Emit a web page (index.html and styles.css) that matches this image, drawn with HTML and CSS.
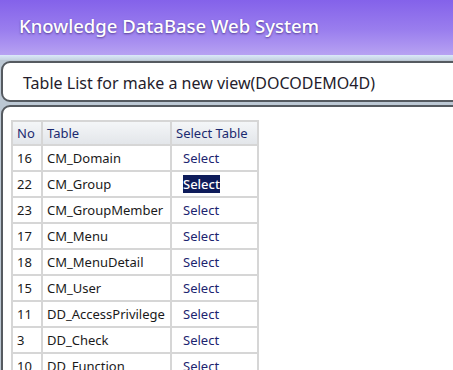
FILE: index.html
```html
<!DOCTYPE html>
<html lang="en">

<head>
    <meta charset="UTF-8">
    <title>Knowledge DataBase Web System</title>
    <link rel="stylesheet" href="styles.css">
</head>

<body>
    <header class="app-header">
        <h1 class="app-title">Knowledge DataBase Web System</h1>
    </header>
    <div class="header-strip"></div>

    <div class="page-title">
        <h2>Table List for make a new view(DOCODEMO4D)</h2>
    </div>

    <main class="page-body">
        <table class="table-list">
            <thead>
                <tr>
                    <th class="col-no">No</th>
                    <th class="col-name">Table</th>
                    <th class="col-select">Select Table</th>
                </tr>
            </thead>
            <tbody>
                <tr><td>16</td><td>CM_Domain</td><td class="select-cell"><a href="#">Select</a></td></tr>
                <tr><td>22</td><td>CM_Group</td><td class="select-cell"><a href="#" class="selected">Select</a></td></tr>
                <tr><td>23</td><td>CM_GroupMember</td><td class="select-cell"><a href="#">Select</a></td></tr>
                <tr><td>17</td><td>CM_Menu</td><td class="select-cell"><a href="#">Select</a></td></tr>
                <tr><td>18</td><td>CM_MenuDetail</td><td class="select-cell"><a href="#">Select</a></td></tr>
                <tr><td>15</td><td>CM_User</td><td class="select-cell"><a href="#">Select</a></td></tr>
                <tr><td>11</td><td>DD_AccessPrivilege</td><td class="select-cell"><a href="#">Select</a></td></tr>
                <tr><td>3</td><td>DD_Check</td><td class="select-cell"><a href="#">Select</a></td></tr>
                <tr><td>10</td><td>DD_Function</td><td class="select-cell"><a href="#">Select</a></td></tr>
            </tbody>
        </table>
    </main>
</body>

</html>
```

FILE: styles.css
```css
* {
    margin: 0;
    padding: 0;
    box-sizing: border-box;
    font-family: "Noto Sans", "Open Sans", sans-serif;
}

body {
    background-color: #bcc8d4;
    overflow: hidden;
    height: 370px;
}

.app-header {
    height: 55px;
    background: linear-gradient(to bottom, #8462ea 0%, #9a7eee 55%, #b7a2f2 100%);
    padding: 13px 0 0 19px;
}

.app-title {
    color: white;
    font-size: 18.5px;
    font-weight: 500;
    line-height: 26px;
    text-shadow: 0 1px 2px rgba(40, 20, 90, 0.6);
}

.header-strip {
    height: 5px;
    background: linear-gradient(to bottom, #dbe9fa, #c4d2e0);
}

.page-title {
    margin: 1px -20px 0 1px;
    height: 41px;
    background-color: white;
    border: 2px solid #555a60;
    border-radius: 9px;
    padding: 8px 0 0 20px;
}

.page-title h2 {
    font-size: 16px;
    font-weight: 400;
    color: #241c2c;
    line-height: 24px;
}

.page-body {
    margin: 3px -20px 0 1px;
    height: 300px;
    background-color: white;
    border: 2px solid #555a60;
    border-radius: 9px 9px 0 0;
    padding: 13px 0 0 8px;
}

.table-list {
    border-collapse: collapse;
    border: 2px solid #d6d6d6;
    font-size: 13px;
}

.table-list th,
.table-list td {
    border: 2px solid #d6d6d6;
    height: 26px;
    padding: 0 4px;
    text-align: left;
    white-space: nowrap;
}

.table-list th {
    height: 24px;
    font-weight: 400;
    color: #1c2a70;
    background: linear-gradient(to bottom, #f4f6f8, #e3e6ea);
}

.table-list td {
    color: #1a1a1a;
}

.col-no {
    width: 30px;
}

.col-name {
    width: 129px;
}

.col-select {
    width: 87px;
}

.table-list .select-cell {
    padding-left: 11px;
}

.select-cell a {
    color: #1c2470;
    text-decoration: none;
}

.select-cell a.selected {
    background-color: #0e1c5a;
    color: white;
    font-weight: 500;
}
```
